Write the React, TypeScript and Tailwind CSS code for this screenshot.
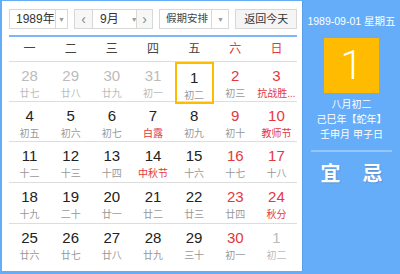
type Day = {
  n: number;
  lunar: string;
  other?: boolean;
  red?: boolean;
  festival?: boolean;
  today?: boolean;
};

const weeks: Day[][] = [
  [
    { n: 28, lunar: "廿七", other: true },
    { n: 29, lunar: "廿八", other: true },
    { n: 30, lunar: "廿九", other: true },
    { n: 31, lunar: "初一", other: true },
    { n: 1, lunar: "初二", today: true },
    { n: 2, lunar: "初三", red: true },
    { n: 3, lunar: "抗战胜...", red: true, festival: true },
  ],
  [
    { n: 4, lunar: "初五" },
    { n: 5, lunar: "初六" },
    { n: 6, lunar: "初七" },
    { n: 7, lunar: "白露", festival: true },
    { n: 8, lunar: "初九" },
    { n: 9, lunar: "初十", red: true },
    { n: 10, lunar: "教师节", red: true, festival: true },
  ],
  [
    { n: 11, lunar: "十二" },
    { n: 12, lunar: "十三" },
    { n: 13, lunar: "十四" },
    { n: 14, lunar: "中秋节", festival: true },
    { n: 15, lunar: "十六" },
    { n: 16, lunar: "十七", red: true },
    { n: 17, lunar: "十八", red: true },
  ],
  [
    { n: 18, lunar: "十九" },
    { n: 19, lunar: "二十" },
    { n: 20, lunar: "廿一" },
    { n: 21, lunar: "廿二" },
    { n: 22, lunar: "廿三" },
    { n: 23, lunar: "廿四", red: true },
    { n: 24, lunar: "秋分", red: true, festival: true },
  ],
  [
    { n: 25, lunar: "廿六" },
    { n: 26, lunar: "廿七" },
    { n: 27, lunar: "廿八" },
    { n: 28, lunar: "廿九" },
    { n: 29, lunar: "三十" },
    { n: 30, lunar: "初一", red: true },
    { n: 1, lunar: "初二", other: true },
  ],
];

const rowHeights = ["h-[40px]", "h-[40px]", "h-[41px]", "h-[41px]", "h-[40px]"];

const weekdays = ["一", "二", "三", "四", "五", "六", "日"];

const font = "font-['Liberation_Sans','Noto_Sans_CJK_SC',sans-serif]";

function Caret() {
  return <span className="text-[7px] text-[#999] leading-none">▼</span>;
}

function DayCell({ d }: { d: Day }) {
  const numColor = d.other ? "text-[#bbb]" : d.red ? "text-[#e4393c]" : "text-[#222]";
  const lunarColor = d.other ? "text-[#bbb]" : d.festival ? "text-[#e4393c]" : "text-[#999]";
  return (
    <div
      className={`flex flex-col items-center pt-[5px] ${
        d.today ? "border-2 border-[#ffbb00] pt-[3px] mx-[1px]" : ""
      }`}
    >
      <span className={`text-[15px] leading-[17px] ${numColor}`}>{d.n}</span>
      <span className={`text-[10px] leading-[13px] mt-[3px] whitespace-nowrap ${lunarColor}`}>{d.lunar}</span>
    </div>
  );
}

export default function App() {
  return (
    <div className={`w-[400px] h-[274px] bg-[#66adf9] flex pl-[2px] pt-[1px] pb-[3px] ${font}`}>
      <div className="w-[300px] bg-white pl-[7px] pr-[5px] pt-[8px] flex flex-col">
        {/* toolbar */}
        <div className="flex items-center h-[20px] text-[11px] text-[#333] whitespace-nowrap">
          <div className="w-[59px] h-full border border-[#d8d8d8] flex items-center">
            <span className="flex-1 pl-[6px] text-[12px]">1989年</span>
            <span className="w-[17px] h-full border-l border-[#d8d8d8] flex items-center justify-center">
              <Caret />
            </span>
          </div>
          <div className="ml-[6px] h-full border border-[#d8d8d8] flex items-center">
            <span className="w-[17px] h-full flex items-center justify-center text-[14px] text-[#888] bg-[#f7f7f7]">‹</span>
            <span className="w-[44px] h-full border-l border-[#d8d8d8] flex items-center pl-[7px] gap-[12px] text-[12px]">
              9月
              <Caret />
            </span>
            <span className="w-[16px] h-full border-l border-[#d8d8d8] flex items-center justify-center text-[14px] text-[#888] bg-[#f7f7f7]">›</span>
          </div>
          <div className="ml-[6px] w-[71px] h-full border border-[#d8d8d8] flex items-center">
            <span className="flex-1 pl-[6px] text-[10.5px] text-[#444]">假期安排</span>
            <span className="w-[17px] h-full border-l border-[#d8d8d8] flex items-center justify-center">
              <Caret />
            </span>
          </div>
          <div className="ml-[6px] w-[62px] h-full border border-[#d8d8d8] bg-[#f5f5f5] flex items-center justify-center text-[#333]">
            返回今天
          </div>
        </div>
        <div className="mt-[6px] h-[2px] bg-[#7db7f7]" />
        {/* weekdays */}
        <div className="grid grid-cols-7 h-[25px] items-center text-[12px] border-b border-[#ddd]">
          {weekdays.map((w, i) => (
            <span key={w} className={`text-center ${i >= 5 ? "text-[#e4393c]" : "text-[#444]"}`}>
              {w}
            </span>
          ))}
        </div>
        {/* days */}
        {weeks.map((wk, i) => (
          <div
            key={i}
            className={`grid grid-cols-7 ${rowHeights[i]} ${i < weeks.length - 1 ? "border-b border-[#ddd]" : ""}`}
          >
            {wk.map((d, j) => (
              <DayCell key={j} d={d} />
            ))}
          </div>
        ))}
      </div>
      {/* side panel */}
      <div className="flex-1 border-l border-[#5a9eea] flex flex-col items-center text-white pt-[14px]">
        <div className="text-[10.5px] leading-[13px] whitespace-nowrap">1989-09-01 星期五</div>
        <div className="mt-[10px] w-[55px] h-[55px] bg-[#ffbb00] flex items-center justify-center font-['Roboto',sans-serif] font-light text-[40px] leading-none">
          1
        </div>
        <div className="mt-[4px] text-[10px] leading-[15px] text-center whitespace-nowrap">
          <div>八月初二</div>
          <div>己巳年【蛇年】</div>
          <div>壬申月 甲子日</div>
        </div>
        <div className="mt-[8px] w-[81px] h-[2px] bg-white/30" />
        <div className="mt-[10px] flex gap-[22px] text-[20px] font-bold leading-[24px] [text-shadow:1px_1px_1px_rgba(0,0,0,0.15)]">
          <span>宜</span>
          <span>忌</span>
        </div>
      </div>
    </div>
  );
}
